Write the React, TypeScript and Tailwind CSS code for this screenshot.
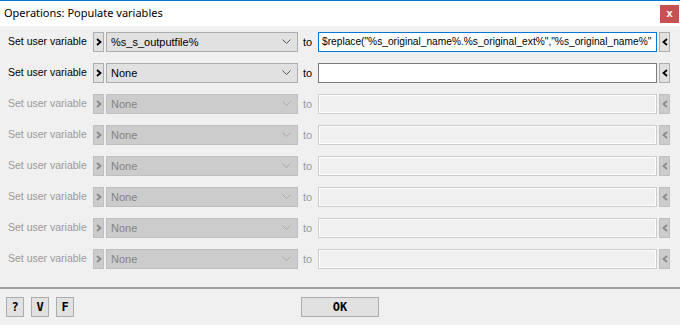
import React from "react";

const font = { fontFamily: '"Liberation Sans", Arial, sans-serif' };

const Chevron = ({ dir, disabled }: { dir: "right" | "left"; disabled?: boolean }) => (
  <svg width="6" height="8" viewBox="0 0 6 8" className="block">
    <path
      d={dir === "right" ? "M1 1 L4.5 4 L1 7" : "M5 1 L1.5 4 L5 7"}
      fill="none"
      stroke={disabled ? "#8a8a8a" : "#000"}
      strokeWidth="1.8"
    />
  </svg>
);

const DownArrow = ({ disabled }: { disabled?: boolean }) => (
  <svg width="9" height="6" viewBox="0 0 9 6" className="block">
    <path d="M0.5 0.5 L4.5 4.5 L8.5 0.5" fill="none" stroke={disabled ? "#a8a8a8" : "#555"} strokeWidth="1" />
  </svg>
);

type RowProps = {
  enabled: boolean;
  selected: string;
  value?: string;
  focused?: boolean;
};

const VariableRow: React.FC<RowProps> = ({ enabled, selected, value, focused }) => {
  return (
    <div className="flex flex-row items-center h-[20px] text-[11px]" style={font}>
      <div
        className={`shrink-0 w-[93px] pl-[8px] whitespace-nowrap text-[10.5px] ${
          enabled ? "text-black" : "text-[#9a9a9a]"
        }`}
      >
        Set user variable
      </div>
      <div
        className={`shrink-0 w-[11px] h-[20px] flex items-center justify-center border ${
          enabled ? "bg-[#e1e1e1] border-[#adadad]" : "bg-[#cccccc] border-[#bfbfbf]"
        }`}
      >
        <Chevron dir="right" disabled={!enabled} />
      </div>
      <div
        className={`shrink-0 ml-[2px] w-[192px] h-[20px] flex items-center justify-between pl-[4px] pr-[6px] border ${
          enabled ? "bg-[#e1e1e1] border-[#adadad] text-black" : "bg-[#cccccc] border-[#bfbfbf] text-[#838383]"
        }`}
      >
        <span className="whitespace-nowrap">{selected}</span>
        <DownArrow disabled={!enabled} />
      </div>
      <div className={`shrink-0 w-[20px] pl-[5px] ${enabled ? "text-black" : "text-[#9a9a9a]"}`}>to</div>
      <div
        className={`shrink-0 w-[339px] h-[20px] flex items-center overflow-hidden border ${
          focused
            ? "bg-white border-[#0078d7]"
            : enabled
            ? "bg-white border-[#7a7a7a]"
            : "bg-[#f0f0f0] border-[#cccccc] shadow-[inset_0_0_0_1px_#ffffff]"
        }`}
      >
        <span className="whitespace-nowrap pl-[3px] text-[10.2px]">{value}</span>
      </div>
      <div
        className={`shrink-0 ml-[2px] w-[11px] h-[20px] flex items-center justify-center border ${
          enabled ? "bg-[#e1e1e1] border-[#adadad]" : "bg-[#cccccc] border-[#bfbfbf]"
        }`}
      >
        <Chevron dir="left" disabled={!enabled} />
      </div>
    </div>
  );
};

const SmallButton = ({ label, className }: { label: string; className?: string }) => (
  <button
    className={`shrink-0 h-[20px] flex items-center justify-center bg-[#e1e1e1] border border-[#adadad] text-[12px] font-bold text-black ${className}`}
    style={{ fontFamily: '"DejaVu Sans Mono", "Liberation Mono", monospace' }}
  >
    {label}
  </button>
);

export default function App() {
  return (
    <div className="w-[680px] h-[334px] bg-white flex flex-col overflow-hidden">
      <div className="h-[26px] border-t border-[#0078d7] bg-white flex flex-row items-center justify-between">
        <span className="pl-[4px] text-[11px] text-black" style={{ fontFamily: '"Noto Sans", "Open Sans", sans-serif' }}>
          Operations: Populate variables
        </span>
        <div
          className="w-[19px] h-[18px] mr-[1px] bg-[#c75050] flex items-center justify-center text-white text-[11px] font-bold leading-none"
          style={font}
        >
          x
        </div>
      </div>
      <div className="bg-[#f0f0f0] flex flex-col">
        <div className="flex flex-col gap-[11px] pt-[6px] pb-[18px]">
          <VariableRow
            enabled
            focused
            selected="%s_s_outputfile%"
            value={'$replace("%s_original_name%.%s_original_ext%","%s_original_name%"'}
          />
          <VariableRow enabled selected="None" value="" />
          {Array.from({ length: 6 }).map((_, i) => (
            <VariableRow key={i} enabled={false} selected="None" value="" />
          ))}
        </div>
        <div className="h-[2px] bg-[#a0a0a0]" />
        <div className="h-[36px] flex flex-row items-start pt-[8px] pl-[6px]">
          <SmallButton label="?" className="w-[18px]" />
          <SmallButton label="V" className="w-[18px] ml-[7px]" />
          <SmallButton label="F" className="w-[18px] ml-[7px]" />
          <SmallButton label="OK" className="w-[78px] ml-[227px]" />
        </div>
      </div>
    </div>
  );
}
